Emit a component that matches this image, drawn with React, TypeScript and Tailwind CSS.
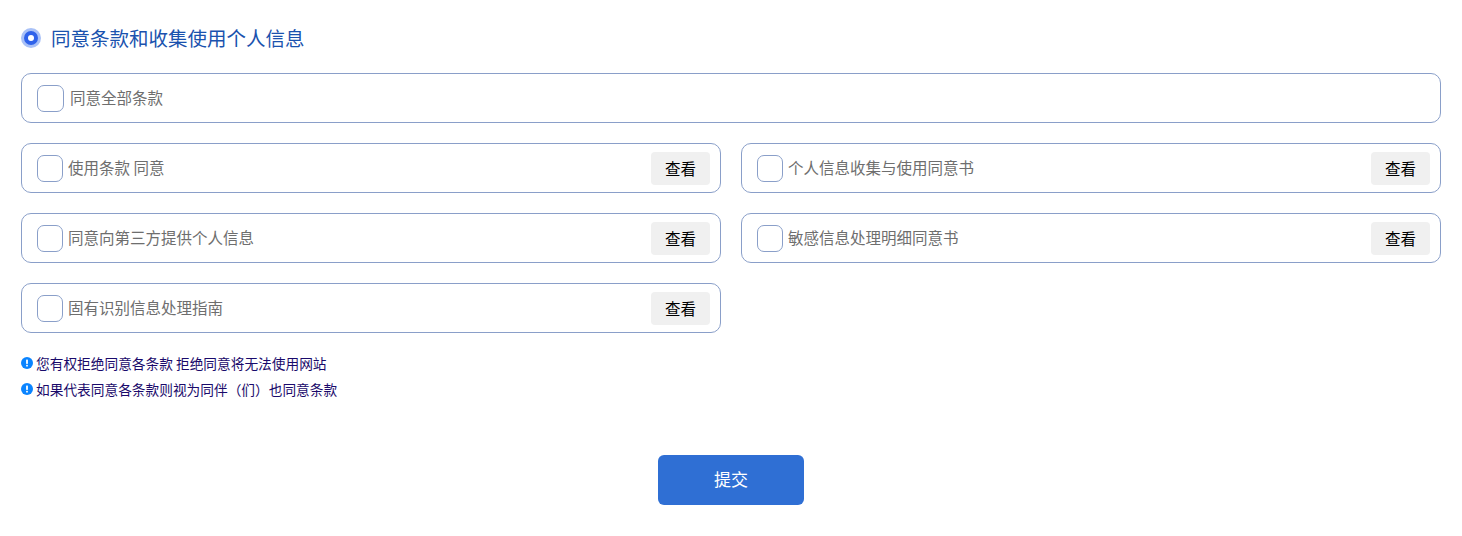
const FONT = 'font-["Microsoft_YaHei","Noto_Sans_CJK_SC",sans-serif]';

function Row({ label, view = true, wide = false }: { label: string; view?: boolean; wide?: boolean }) {
  return (
    <div className="flex items-center h-[50px] rounded-[10px] border border-[#8a9fc9] pl-[15px] pr-[10px]">
      <span className={`shrink-0 h-[27px] rounded-[7px] border border-[#8a9fc9] ${wide ? 'w-[27px]' : 'w-[26px]'}`} />
      <span className={`text-[15.5px] text-[#6e6e6e] ${wide ? 'ml-[6px] -mt-px' : 'ml-[5px]'}`}>{label}</span>
      {view && (
        <button className="ml-auto w-[59px] h-[33px] mt-px rounded-[4px] bg-[#f0f0f0] text-[15.5px] text-black">查看</button>
      )}
    </div>
  );
}

function Note({ text }: { text: string }) {
  return (
    <div className="flex items-center h-[26px] text-[13.7px] text-[#1a0a6b]">
      <svg width="12" height="12" viewBox="0 0 12 12" className="shrink-0 mr-[3px] -mt-[2px]">
        <circle cx="6" cy="6" r="6" fill="#0a84ff" />
        <rect x="5.1" y="2.5" width="1.8" height="4.4" rx="0.6" fill="#fff" />
        <rect x="5.1" y="7.8" width="1.8" height="1.8" rx="0.6" fill="#fff" />
      </svg>
      <span className="-mt-[2px]">{text}</span>
    </div>
  );
}

export default function App() {
  return (
    <div className={`w-[1462px] h-[536px] bg-white px-[21px] pt-[27px] ${FONT}`}>
      <div className="flex items-center h-[22px]">
        <span className="flex items-center justify-center w-[20px] h-[20px] rounded-full bg-[#a9c1f7]">
          <span className="flex items-center justify-center w-[14px] h-[14px] rounded-full bg-[#2f62ea]">
            <span className="w-[6px] h-[6px] rounded-full bg-white" />
          </span>
        </span>
        <h2 className="ml-[10px] text-[19.5px] font-normal text-[#1a52ae]">同意条款和收集使用个人信息</h2>
      </div>

      <div className="mt-[24px]">
        <Row label="同意全部条款" view={false} wide />
      </div>

      <div className="grid grid-cols-2 gap-x-[20px] gap-y-[20px] mt-[20px]">
        <Row label="使用条款 同意" />
        <Row label="个人信息收集与使用同意书" />
        <Row label="同意向第三方提供个人信息" />
        <Row label="敏感信息处理明细同意书" />
        <Row label="固有识别信息处理指南" />
      </div>

      <div className="mt-[18px]">
        <Note text="您有权拒绝同意各条款 拒绝同意将无法使用网站" />
        <Note text="如果代表同意各条款则视为同伴（们）也同意条款" />
      </div>

      <div className="flex justify-center mt-[52px]">
        <button className="w-[146px] h-[50px] pb-[2px] rounded-[6px] bg-[#2f6fd4] text-[17px] text-white">提交</button>
      </div>
    </div>
  );
}
